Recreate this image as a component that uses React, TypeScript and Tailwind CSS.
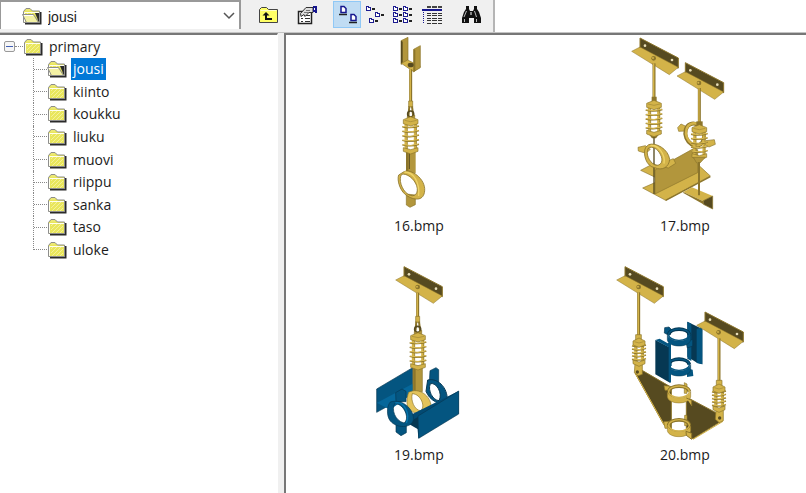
import type { ReactNode } from "react";

const folders = ["jousi", "kiinto", "koukku", "liuku", "muovi", "riippu", "sanka", "taso", "uloke"];

const GOLD = "#d3b349";
const MID = "#b2963c";
const DARK = "#564a20";
const EDGE = "#8c752b";
const BLUE = "#045580";
const NAVY = "#063853";

function FolderIcon({ open = false }: { open?: boolean }) {
    return (
        <svg width="20" height="18" viewBox="0 0 20 18" className="shrink-0" aria-hidden="true">
            <path d="M3 16.5h15.5V5" fill="none" stroke="#2a2a2a" strokeWidth="2" />
            <path d="M1.5 15.5V4.5L4 1.5h4L10.5 4h7v11.5z" fill="#e9e65c" stroke="#8d8d8d" />
            <path d="M4 3h4" stroke="#eeea8a" />
            <path d="M4 8l2-2M4 12l6-6M5 15l9-9M9 15l7-7M13 15l3-3" stroke="#f4f19a" />
            <path d="M2.5 15V5.5h14.5" fill="none" stroke="#fffff0" />
            {open && (
                <>
                    <path d="M12 6h5v9.5z" fill="#2a2a2a" />
                    <path d="M10 6h3l3 7z" fill="#e9e65c" />
                    <path d="M0.5 7.5h11l5 8H4.5z" fill="#f3f1a4" stroke="#8d8d8d" />
                    <path d="M2 8.5h9" stroke="#fff" />
                </>
            )}
        </svg>
    );
}

// Angle bracket bolted to the ceiling, drawn from its upper left corner
function Bracket({ x, y }: { x: number; y: number }) {
    return (
        <g transform={`translate(${x} ${y})`}>
            <path d="M25 0 140 60V92L25 32z" fill={DARK} />
            <path d="M0 40 25 27 140 88 113 110z" fill={GOLD} stroke={EDGE} strokeWidth="1.5" />
            <path d="M25 30V0L140 60V90" fill="none" stroke={EDGE} strokeWidth="3" />
            <circle cx="40" cy="23" r="4" fill="#e9dfb8" />
            <circle cx="121" cy="66" r="4" fill="#e9dfb8" />
            <circle cx="66" cy="61" r="7" fill={EDGE} />
            <circle cx="64" cy="60" r="3" fill={GOLD} />
        </g>
    );
}

function Rod({ x, y1, y2 }: { x: number; y1: number; y2: number }) {
    return (
        <>
            <path d={`M${x} ${y1}V${y2}`} stroke={EDGE} strokeWidth="9" />
            <path d={`M${x - 1} ${y1}V${y2}`} stroke={GOLD} strokeWidth="4" />
        </>
    );
}

// Spring cage with open coils; x and y are the top centre
function Spring({ x, y, h = 105, w = 44 }: { x: number; y: number; h?: number; w?: number }) {
    const left = -w / 2;
    const coils = [0.26, 0.39, 0.52, 0.65, 0.78];
    return (
        <g transform={`translate(${x} ${y})`}>
            <path d={`M${left + 8} 15V${h - 12}M${-left - 8} 15V${h - 12}`} stroke={GOLD} strokeWidth="9" />
            <path d={`M${left + 12} 18V${h - 12}M${-left - 5} 18V${h - 12}`} stroke={EDGE} strokeWidth="2" />
            {coils.map((c) => (
                <g key={c} transform={`translate(0 ${c * h})`}>
                    <path d={`M${left - 3} -1Q0 5 ${-left + 3} -3`} fill="none" stroke={EDGE} strokeWidth="4" />
                    <path d={`M${left - 2} -2Q0 4 ${-left + 2} -4`} fill="none" stroke="#dcbd54" strokeWidth="3" />
                </g>
            ))}
            <path d={`M${left} 5 0 -4 ${-left} 5V17L0 24 ${left} 17z`} fill={GOLD} stroke={EDGE} strokeWidth="2" />
            <path d={`M${left + 4} 7Q0 15 ${-left - 4} 7`} fill="none" stroke={MID} strokeWidth="3" />
            <path d={`M${left} ${h - 16} 0 ${h - 10} ${-left} ${h - 16}V${h - 5}L0 ${h + 3} ${left} ${h - 5}z`} fill={GOLD} stroke={EDGE} strokeWidth="2" />
        </g>
    );
}

function Shackle({ x, y }: { x: number; y: number }) {
    return (
        <g transform={`translate(${x} ${y})`}>
            <path d="M-6 0H6V18H-6z" fill={GOLD} stroke={EDGE} strokeWidth="2" />
            <path d="M-4 16-7 48M4 16 8 48" stroke={EDGE} strokeWidth="6" />
            <circle cy="39" r="9" fill="none" stroke={DARK} strokeWidth="5" />
            <path d="M-10 58V46L0 50 12 42V60z" fill={MID} stroke={EDGE} strokeWidth="2" />
        </g>
    );
}

// Pipe clamp lying flat, seen from above
function FlatClamp({ x, y, fill, shade }: { x: number; y: number; fill: string; shade: string }) {
    return (
        <g transform={`translate(${x} ${y})`}>
            <path d="M-31 0C-27-22 27-22 31 0" fill="none" stroke={shade} strokeWidth="11" />
            <path d="M-35 0V16C-30 40 30 40 35 16V0C27 24-27 24-35 0z" fill={fill} stroke={shade} strokeWidth="1.5" />
            <ellipse rx="31" ry="17" fill="none" stroke={fill} strokeWidth="4" />
        </g>
    );
}

function SpringClamp() {
    return (
        <svg width="160" height="181" viewBox="-123 3 480 543" aria-hidden="true">
            <path d="M63 20 84 10V78L63 91z" fill={MID} stroke={EDGE} strokeWidth="2" />
            <path d="M63 20 68 23V90L63 91z" fill={DARK} />
            <path d="M64 88 83 78 121 97 101 113z" fill={GOLD} stroke={EDGE} strokeWidth="2" />
            <path d="M101 46 121 35V101L101 113z" fill={MID} stroke={EDGE} strokeWidth="2" />
            <path d="M101 46 106 48V110L101 113z" fill={EDGE} />
            <ellipse cx="92" cy="93" rx="9" ry="7" fill={DARK} />
            <Rod x={92} y1={106} y2={205} />
            <Shackle x={92} y={201} />
            <path d="M78 350H107V418H78z" fill={MID} />
            <path d="M78 350H85V418H78z" fill={EDGE} />
            <path d="M88 356V405" stroke={DARK} strokeWidth="3" />
            <Spring x={92} y={252} />
            <path d="M79 480V513L90 520 106 512V483z" fill={MID} stroke={EDGE} strokeWidth="2" />
            <path fillRule="evenodd" d="M72 413C92 403 137 434 134 470C132 500 106 500 84 487C60 475 50 438 56 423ZM65 421C55 435 64 467 84 481C104 493 117 478 110 455C102 433 80 417 65 421Z" fill={GOLD} stroke={EDGE} strokeWidth="2.5" />
            <path d="M73 414C103 414 119 447 116 486" fill="none" stroke="#efd468" strokeWidth="4" />
        </svg>
    );
}

function TwinSpringBeam() {
    return (
        <svg width="160" height="181" viewBox="-45 3 480 543" aria-hidden="true">
            <path d="M190 474 216 460 278 486 250 502z" fill={GOLD} />
            <path d="M190 474 250 502V511L190 477z" fill={EDGE} />
            <path d="M278 486V525L250 511V500z" fill={DARK} stroke={EDGE} strokeWidth="2" />
            <path d="M62 409 100 389 140 408 104 429z" fill={GOLD} stroke={EDGE} strokeWidth="2" />
            <path d="M68 462 232 390 271 426 137 499z" fill={GOLD} stroke={EDGE} strokeWidth="2" />
            <path d="M105 408 222 343 233 347V416L105 480z" fill={MID} stroke={EDGE} strokeWidth="2" />
            <path d="M137 499 271 428" stroke={EDGE} strokeWidth="4" />
            <Bracket x={35} y={12} />
            <Bracket x={171} y={86} />
            <Rod x={102} y1={88} y2={190} />
            <path d="M95 188H110V210H95zM86 300H118L108 313H96z" fill={EDGE} />
            <Spring x={102} y={203} h={102} />
            <path d="M102 310V480" stroke={DARK} strokeWidth="4" />
            <path d="M173 281 183 270 202 279 199 291 176 292zM258 320 283 317 286 331 267 339 252 330z" fill={GOLD} stroke={EDGE} strokeWidth="2" />
            <ellipse cx="224" cy="302" rx="27" ry="34" transform="rotate(-22 224 302)" fill="none" stroke={EDGE} strokeWidth="12" />
            <ellipse cx="226" cy="301" rx="27" ry="34" transform="rotate(-22 226 301)" fill="none" stroke={GOLD} strokeWidth="7" />
            <Rod x={238} y1={162} y2={265} />
            <path d="M229 262H248V287H229z" fill={EDGE} />
            <Spring x={238} y={276} h={99} />
            <path d="M220 370H256L240 387H230z" fill={MID} stroke={EDGE} strokeWidth="2" />
            <path d="M237 384V484" stroke={EDGE} strokeWidth="6" />
            <path d="M54 340 76 335 91 346 78 358 55 351zM137 383 160 374 167 388 145 402 124 397z" fill={GOLD} stroke={EDGE} strokeWidth="2" />
            <path fillRule="evenodd" d="M86 332C107 324 145 345 149 376C147 400 126 411 104 401C79 398 67 360 77 340ZM85 342C76 359 87 384 105 393C123 398 132 380 121 361C113 344 97 336 85 342Z" fill={GOLD} stroke={EDGE} strokeWidth="2.5" />
            <path d="M91 335C114 331 137 360 132 389" fill="none" stroke="#efd468" strokeWidth="4" />
        </svg>
    );
}

function SpringCradle() {
    return (
        <svg width="160" height="181" viewBox="-63 12 480 543" aria-hidden="true">
            <path d="M50 387 158 323V380L108 425 50 457z" fill={BLUE} stroke={NAVY} strokeWidth="2" />
            <path d="M50 429 158 371 170 392 90 449 53 430z" fill="#06679a" />
            <path d="M210 332 228 323 236 329V368H208z" fill={BLUE} stroke={NAVY} strokeWidth="2" />
            <path fillRule="evenodd" d="M203 360C238 352 267 391 261 426C240 438 209 422 198 394ZM211 371C202 392 219 421 237 422C249 401 230 366 211 371Z" fill={BLUE} stroke={NAVY} strokeWidth="3" />
            <Bracket x={107} y={20} />
            <Rod x={173} y1={98} y2={172} />
            <Shackle x={173} y={169} />
            <path d="M159 318H187V395H159z" fill={MID} stroke={EDGE} strokeWidth="2" />
            <path d="M160 318H167V393H160z" fill={EDGE} />
            <Spring x={174} y={222} />
            <path fillRule="evenodd" d="M146 397C177 380 213 409 213 439C203 456 165 466 150 451C137 438 140 414 146 397ZM157 401C151 422 164 450 181 452C198 444 184 402 157 401Z" fill="#e3c35b" stroke={EDGE} strokeWidth="2" />
            <path d="M150 466 174 454 296 393V460L175 535 172 497z" fill="#034a73" />
            <path d="M174 468 296 393V462L176 535z" fill={BLUE} stroke={NAVY} strokeWidth="2" />
            <path d="M148 485 174 471V508L148 493z" fill={NAVY} />
            <path d="M107 398 126 387 138 394V425H108zM108 490H139V518L123 527 108 516z" fill={BLUE} stroke={NAVY} strokeWidth="2" />
            <path fillRule="evenodd" d="M91 426C129 414 164 451 160 480C154 505 111 506 91 483C79 468 80 438 91 426ZM104 431C94 447 104 482 132 489C151 477 132 430 104 431Z" fill={BLUE} stroke={NAVY} strokeWidth="2" />
            <path d="M106 429C133 423 151 462 139 489" fill="none" stroke="#0876ad" strokeWidth="4" />
        </svg>
    );
}

function RiserSupport() {
    return (
        <svg width="160" height="181" viewBox="0 12 480 543" aria-hidden="true">
            <path d="M247 185 292 207V313L276 308 247 290z" fill={NAVY} />
            <path d="M247 185 259 191V303L247 296z" fill={BLUE} />
            <path d="M275 207 292 200V313L275 309z" fill={BLUE} />
            <path d="M185 298H200V318H185zM246 325 263 329 265 348 246 351z" fill={BLUE} />
            <FlatClamp x={222} y={314} fill={BLUE} shade={NAVY} />
            <path d="M179 203 192 201 203 212 192 226 178 219zM242 242 263 239V258L247 264z" fill={BLUE} stroke={NAVY} strokeWidth="2" />
            <FlatClamp x={222} y={224} fill={BLUE} shade={NAVY} />
            <path d="M151 240 196 263V369L151 343z" fill={NAVY} />
            <path d="M151 240 164 236 188 250 198 244V368L191 362V262z" fill={BLUE} />
            <Bracket x={35} y={20} />
            <Bracket x={275} y={156} />
            <Rod x={101} y1={97} y2={235} />
            <Rod x={342} y1={235} y2={370} />
            <path d="M101 325 199 382V512L176 493 91 341z" fill={DARK} stroke={EDGE} strokeWidth="3" />
            <path d="M244 411 350 467V483L264 536 244 524z" fill={DARK} stroke={EDGE} strokeWidth="3" />
            <path d="M91 340 178 495 199 512M264 538 354 484" fill="none" stroke={GOLD} strokeWidth="3" />
            <path d="M92 224H109V243H92zM90 309H112V343L99 347 88 338zM334 361H351V380H334zM333 451H355V482L343 488 331 478z" fill={GOLD} stroke={EDGE} strokeWidth="2" />
            <Spring x={102} y={238} h={78} w={36} />
            <Spring x={342} y={376} h={78} w={36} />
            <circle cx="97" cy="336" r="5" fill={DARK} />
            <circle cx="344" cy="474" r="5" fill={DARK} />
            <path d="M177 377 196 379V391H180zM238 368 246 372V400H238zM176 485 196 484V505H180zM239 466H246V497H239z" fill={GOLD} stroke={EDGE} strokeWidth="2" />
            <FlatClamp x={222} y={395} fill={GOLD} shade={EDGE} />
            <FlatClamp x={222} y={496} fill={GOLD} shade={EDGE} />
            <path d="M244 414 260 421V438M243 514 260 520V538L244 526z" fill={GOLD} stroke={EDGE} strokeWidth="3" />
        </svg>
    );
}

// Small page glyph with its name line, used by the view buttons
function Doc({ x, y }: { x: number; y: number }) {
    return (
        <>
            <path d={`M${x} ${y}h3v1h2v4h-5z`} fill="#1c1c91" />
            <path d={`M${x + 1} ${y + 1}h1v1h2v2h-3z`} fill="#fff" />
            <path d={`M${x + 6} ${y + 3}h3`} stroke="#222" strokeWidth="2" />
        </>
    );
}

const tools: { label: string; spacing: string; icon: ReactNode }[] = [
    {
        label: "Up one level",
        spacing: "ml-[13px]",
        icon: (
            <>
                <path d="M5.5 21.5V8.5l2-2h5l2 2h9v13z" fill="#ffff66" stroke="#444" />
                <path d="M6.5 9.5h16" stroke="#ffffc8" />
                <path d="M12 12v6H18" stroke="#111" strokeWidth="2" />
                <path d="M8.5 14.5 12 11l3.5 3.5z" fill="#111" />
            </>
        ),
    },
    {
        label: "Properties",
        spacing: "ml-[11px]",
        icon: (
            <>
                <path d="M5.5 10.5h13v12h-13z" fill="#fff" stroke="#222" strokeWidth="1.5" />
                <path d="M8 14.5h2m2 0h5M8 17.5h2m2 0h5M8 20.5h2m2 0h5" stroke="#333" />
                <path d="M7.5 12.5 13 6.5h7v5h-4l-4 4-1-2-3 2z" fill="#ddd" stroke="#333" />
                <path d="M13 9.5h4M11 11.5h5" stroke="#777" />
                <path d="M20 5h4v7h-2v-1h-2z" fill="#17178e" />
                <path d="M21 7h1v2h-1z" fill="#fff" />
            </>
        ),
    },
    {
        label: "Large icons",
        spacing: "ml-3",
        icon: (
            <>
                <path d="M8 5.5h3l2 2v4H8zM18 13.5h3l2 2v4h-5z" fill="#fff" stroke="#17178e" strokeWidth="1.5" />
                <path d="M6 13.5h8m2 8h8" stroke="#222" strokeWidth="1.5" />
            </>
        ),
    },
    {
        label: "Small icons",
        spacing: "ml-0",
        icon: (
            <>
                <Doc x={5} y={5} />
                <Doc x={14} y={11} />
                <Doc x={8} y={17} />
            </>
        ),
    },
    {
        label: "List",
        spacing: "ml-0",
        icon: [5, 11, 17].map((y) => (
            <g key={y}>
                <Doc x={4} y={y} />
                <Doc x={14} y={y} />
            </g>
        )),
    },
    {
        label: "Details",
        spacing: "ml-px",
        icon: (
            <>
                <path d="M9 6h4m1 0h5m1 0h4" stroke="#444" strokeWidth="2" />
                <path d="M4 9h20" stroke="#17178e" strokeWidth="2" />
                <path d="M9 12.5h4m1 0h5m1 0h4M9 14.5h4m1 0h5m1 0h4M9 17.5h4m1 0h5m1 0h4M9 19.5h4m1 0h5m1 0h4M9 22.5h4m1 0h5m1 0h4" stroke="#333" />
                <path d="M5.5 11v12" stroke="#17178e" strokeDasharray="1 1" />
            </>
        ),
    },
    {
        label: "Find",
        spacing: "ml-[11px]",
        icon: (
            <>
                <path d="M9 5h3v3l1 2h3l1-2V5h3v3l2 3 2 6v5h-7v-5h-5v5H5v-5l2-6 2-3z" fill="#111" />
                <path d="M9.5 10 7 16m10.500-6 2 6M7.5 18v3M19.5 18v3" stroke="#bbb" />
                <path d="M14 11v3" stroke="#fff" />
            </>
        ),
    },
];

const files = [
    { name: "16.bmp", drawing: <SpringClamp /> },
    { name: "17.bmp", drawing: <TwinSpringBeam /> },
    { name: "19.bmp", drawing: <SpringCradle /> },
    { name: "20.bmp", drawing: <RiserSupport /> },
];

export default function App() {
    return (
        <div className="flex min-h-screen flex-col bg-[#f0f0f0] text-sm text-[#1c1c1c] font-['Open_Sans','Noto_Sans',sans-serif]">
            {/* Toolbar */}
            <header className="flex h-[33px] shrink-0 border-b border-[#c4c4c4] bg-white">
                <div className="flex shrink-0 items-start border-r-2 border-[#b5b5b5] bg-[#f0f0f0]">
                    <div className="grid h-[29px] w-[241px] shrink-0 items-center border-t-2 border-r-2 border-l border-[#999] bg-white">
                        <select
                            aria-label="Folder"
                            defaultValue="jousi"
                            className="col-start-1 row-start-1 h-full w-full appearance-none bg-transparent pt-0.5 pl-[47px] font-['Liberation_Sans',sans-serif] text-sm outline-none"
                        >
                            {folders.map((f) => (
                                <option key={f}>{f}</option>
                            ))}
                        </select>
                        <div className="pointer-events-none col-start-1 row-start-1 flex items-center justify-between pr-1 pl-[21px]">
                            <FolderIcon open />
                            <svg width="12" height="8" viewBox="0 0 12 8" fill="none" stroke="#555" strokeWidth="1.5">
                                <path d="m1 1 5 5 5-5" />
                            </svg>
                        </div>
                    </div>
                    <div className="flex pt-px pr-2">
                        {tools.map((t) => (
                            <button
                                key={t.label}
                                aria-label={t.label}
                                className={`${t.spacing} ${t.label === "Large icons" ? "border-[#90c8f6] bg-[#c0dcf3]" : "border-transparent"} flex h-[27px] w-7 items-center justify-center border`}
                            >
                                <svg width="28" height="27" viewBox="0 0 28 27" fill="none" className="shrink-0">
                                    {t.icon}
                                </svg>
                            </button>
                        ))}
                    </div>
                </div>
            </header>

            <main className="flex flex-1">
                {/* Folder tree */}
                <nav className="w-[278px] shrink-0 border-t-2 border-r border-t-[#777] border-r-white bg-white">
                    <div className="flex h-[23px] items-center pl-1">
                        <button aria-label="Collapse primary" className="flex h-[11px] w-[11px] items-center justify-center rounded-[2px] border border-[#999] bg-[#f6f6f6]">
                            <span className="h-px w-[7px] bg-[#4260b5]" />
                        </button>
                        <span className="w-2 border-t border-dotted border-[#888]" />
                        <FolderIcon />
                        <span className="ml-1 px-0.5">primary</span>
                    </div>
                    <ul className="flex h-[203px] flex-col pl-[33px]">
                        {folders.map((f, i) => (
                            <li key={f} className="flex flex-1 items-center">
                                <span className={`${i === folders.length - 1 ? "h-1/2 self-start" : "h-full"} border-l border-dotted border-[#888]`} />
                                <span className="w-[13px] border-t border-dotted border-[#888]" />
                                <FolderIcon open={f === "jousi"} />
                                <button className={`${f === "jousi" ? "bg-[#0078d7] text-white" : ""} ml-1 flex h-[22px] items-center px-0.5`}>
                                    {f}
                                </button>
                            </li>
                        ))}
                    </ul>
                </nav>

                {/* Thumbnails */}
                <section className="ml-[6px] min-w-0 flex-1 overflow-hidden border-t-2 border-l-2 border-[#777] bg-white">
                    <div className="grid grid-cols-[repeat(2,266px)]">
                        {files.map((f) => (
                            <figure key={f.name} className="flex h-[229px] flex-col items-center">
                                {f.drawing}
                                <figcaption className="leading-5">{f.name}</figcaption>
                            </figure>
                        ))}
                    </div>
                </section>
            </main>
        </div>
    );
}
